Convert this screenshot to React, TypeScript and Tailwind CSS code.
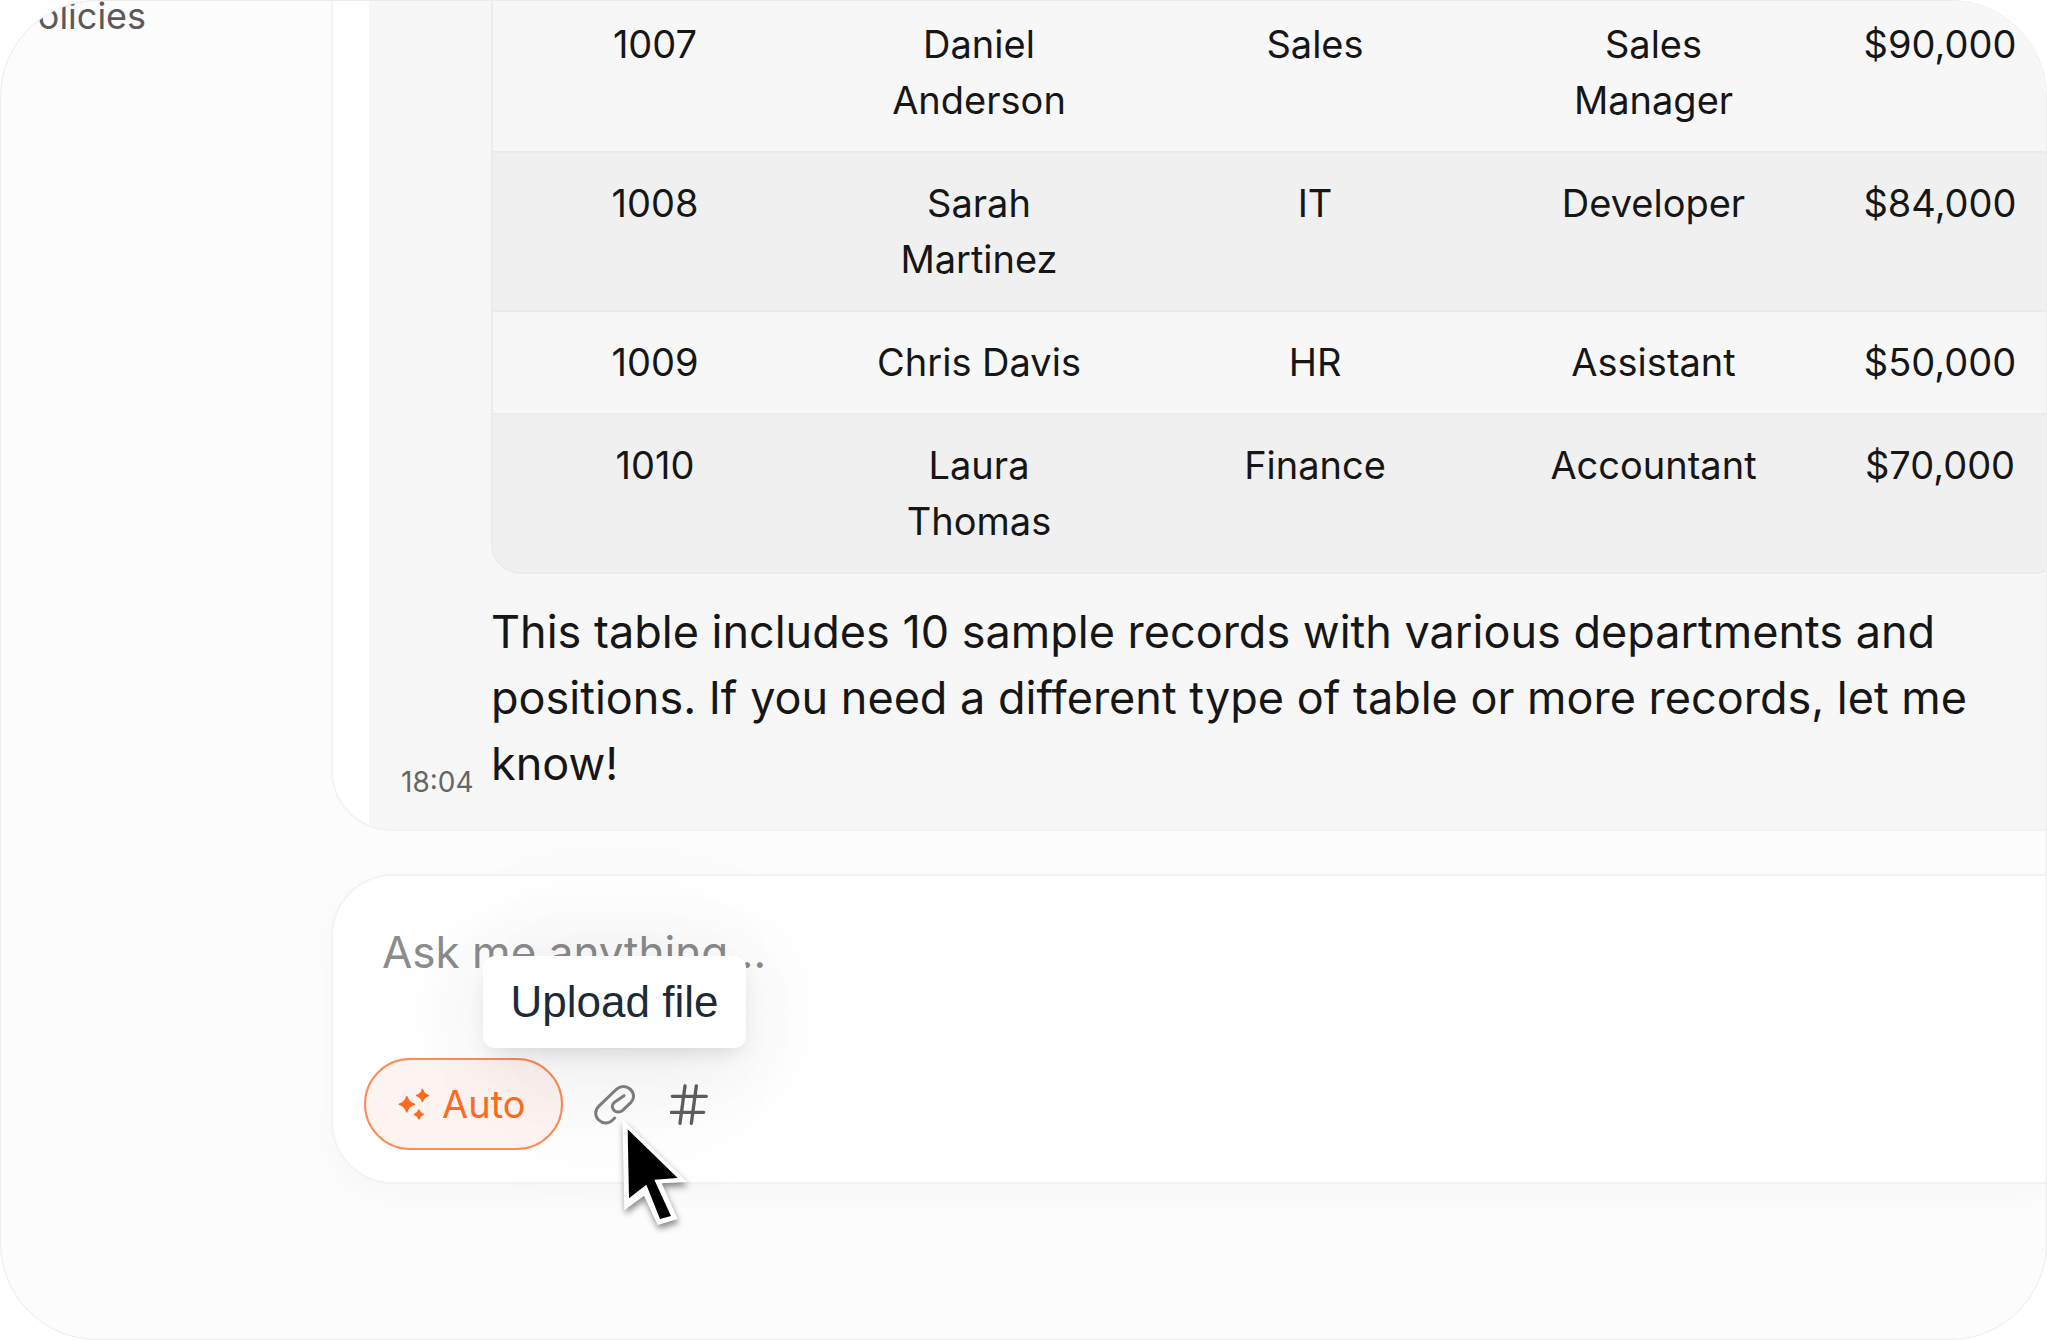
import { useState } from "react";

const employees = [
  { id: "1007", name: "Daniel Anderson", department: "Sales", position: "Sales Manager", salary: "$90,000" },
  { id: "1008", name: "Sarah Martinez", department: "IT", position: "Developer", salary: "$84,000" },
  { id: "1009", name: "Chris Davis", department: "HR", position: "Assistant", salary: "$50,000" },
  { id: "1010", name: "Laura Thomas", department: "Finance", position: "Accountant", salary: "$70,000" },
];

function SparklesIcon() {
  return (
    <svg viewBox="25 38 98 98" className="h-8 w-8" fill="#ff6b21" stroke="#ff6b21" strokeWidth="5" strokeLinejoin="round">
      <path d="M52 65 Q57 83 75 88 Q57 93 52 111 Q47 93 29 88 Q47 83 52 65Z" />
      <path d="M100 43 Q104 57 118 61 Q104 65 100 79 Q96 65 82 61 Q96 57 100 43Z" />
      <path d="M89 106 Q92 116 102 119 Q92 122 89 132 Q86 122 76 119 Q86 116 89 106Z" />
    </svg>
  );
}

function ClipIcon() {
  return (
    <svg viewBox="27 24 123 123" className="h-[41px] w-[41px]" fill="none" stroke="#808080" strokeWidth="9" strokeLinecap="round">
      <path d="M89 126 L83 132 C70 145 52 143 41 132 C29 120 29 103 41 91 L92 42 C105 29 123 29 135 39 C148 50 149 67 138 79 L113 103 C105 110 93 110 87 103 C80 96 81 86 88 79 L117 59" />
    </svg>
  );
}

function HashIcon() {
  return (
    <svg viewBox="32 24 114 123" className="h-[41px] w-[38px]" fill="none" stroke="#606060" strokeWidth="10" strokeLinecap="round">
      <path d="M39 61 H141 M36 109 H133 M77 30 L62 142 M111 30 L96 142" />
    </svg>
  );
}

function Pointer() {
  return (
    <svg
      viewBox="0 0 240 390"
      className="pointer-events-none absolute left-[21px] top-[27px] h-[130px] w-20 max-w-none drop-shadow-[1px_4px_3px_rgba(0,0,0,0.45)]"
    >
      <path fill="#fff" d="M22 25 L217 213 L140 217 L188 324 L128 342 L87 254 L28 298Z" />
      <path fill="#000" d="M38 55 L188 201 L118 206 L168 315 L135 324 L94 221 L42 262Z" />
    </svg>
  );
}

export default function App() {
  const [message, setMessage] = useState("");

  return (
    <div className="h-screen bg-white font-['Inter','Liberation_Sans',sans-serif] text-[#161616]">

      <div className="flex h-full overflow-hidden rounded-[97px] border border-[#ececec] bg-[#fcfcfc]">

        <nav className="w-[330px] shrink-0 pl-[14px]">
          <a href="#policies" className="-mt-[9px] block text-[36px] leading-[48px] text-[#5a5a5a]">
            Policies
          </a>
        </nav>

        <main className="flex min-w-0 flex-1 flex-col gap-[43px] pb-[155px]">

          <section className="flex min-h-0 flex-1 flex-col justify-end overflow-hidden rounded-bl-[60px] border-b-2 border-l-2 border-[#f3f3f3] bg-white pl-9">

            <article className="flex items-end bg-[#f7f7f7] pb-8 pl-8">

              <time className="w-[90px] shrink-0 text-[28px] leading-[30px] text-[#666666]">18:04</time>

              <div className="min-w-0 flex-1">

                <div className="-mr-[18px] overflow-hidden rounded-b-[30px] border-2 border-t-0 border-[#ebebeb]">
                  <table className="w-full table-fixed text-center text-[38px] leading-[56px]">
                    <colgroup>
                      <col className="w-[324px]" />
                      <col className="w-[324px]" />
                      <col className="w-[348px]" />
                      <col className="w-[329px]" />
                      <col />
                    </colgroup>
                    <tbody>
                      {employees.map((row) => (
                        <tr key={row.id} className="border-t-2 border-[#ebebeb] align-top even:bg-[#f0f0f0]">
                          <td className="px-12 pt-[22px] pb-[23px]">{row.id}</td>
                          <td className="px-12 pt-[22px] pb-[23px]">{row.name}</td>
                          <td className="px-12 pt-[22px] pb-[23px]">{row.department}</td>
                          <td className="px-12 pt-[22px] pb-[23px]">{row.position}</td>
                          <td className="pt-[22px] pb-[23px]">{row.salary}</td>
                        </tr>
                      ))}
                    </tbody>
                  </table>
                </div>

                <p className="pt-[25px] text-[45px] leading-[66px]">
                  This table includes 10 sample records with various departments and
                  positions. If you need a different type of table or more records, let me
                  know!
                </p>

              </div>

            </article>

          </section>

          <form
            onSubmit={(e) => e.preventDefault()}
            className="rounded-l-[62px] border-2 border-r-0 border-[#f3f3f3] bg-white pt-[43px] pb-8 pl-[31px] shadow-[0_10px_30px_rgba(0,0,0,0.025)]"
          >
            <textarea
              rows={2}
              aria-label="Message"
              placeholder="Ask me anything..."
              value={message}
              onChange={(e) => setMessage(e.target.value)}
              className="mb-[7px] block w-full resize-none pl-[18px] text-[44px] leading-[66px] outline-none placeholder:text-[#8c8c8c]"
            />

            <div className="flex items-center">

              <button
                type="button"
                className="flex h-[92px] w-[199px] items-center gap-3 rounded-full border-2 border-[#ff8c58] bg-[#fef4f1] pl-8 text-[38px] text-[#ff6b21]"
              >
                <SparklesIcon />
                Auto
              </button>

              <div className="relative ml-[31px]">
                <button type="button" aria-label="Upload file" aria-describedby="upload-tip" className="block">
                  <ClipIcon />
                </button>
                <div
                  id="upload-tip"
                  role="tooltip"
                  className="absolute bottom-full left-1/2 mb-9 -translate-x-1/2 rounded-xl bg-white px-7 text-[44px] leading-[92px] whitespace-nowrap font-['Liberation_Sans',Arial,sans-serif] text-[#1d2b38] shadow-[0_20px_180px_rgba(14,18,40,0.07),0_10px_90px_rgba(14,18,40,0.07),0_10px_20px_-8px_rgba(14,18,40,0.14)]"
                >
                  Upload file
                </div>
                <Pointer />
              </div>

              <button type="button" aria-label="Insert tag" className="ml-[35px]">
                <HashIcon />
              </button>

            </div>
          </form>

        </main>

      </div>

    </div>
  );
}
